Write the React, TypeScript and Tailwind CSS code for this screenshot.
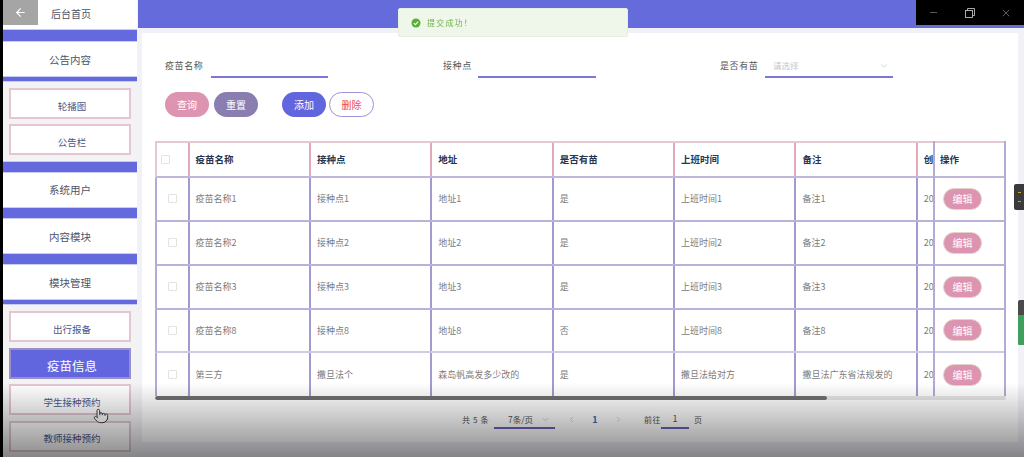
import React from "react";
import { ArrowLeft, ChevronDown, ChevronLeft, ChevronRight, Minus, Pointer, X } from "lucide-react";

const font = "[font-family:'Noto_Sans_CJK_SC','Noto_Sans',sans-serif]";

function Bar({ h }: { h: string }) {
  return <div className={`${h} w-full shrink-0 bg-[#646ade] border-y border-[#c9cbf2]`} />;
}

function MenuRow({ label, h, className }: { label: string; h: string; className?: string }) {
  return (
    <div className={`${h} shrink-0 bg-white flex items-center justify-center text-[10.5px] text-[#4b5468] ${className ?? ""}`}>
      {label}
    </div>
  );
}

function SubItem({ label, active }: { label: string; active?: boolean }) {
  return (
    <div
      className={`h-[31px] w-[122px] shrink-0 ml-[6px] border-[2px] flex items-end justify-center pl-[4px] ${
        active
          ? "bg-[#6266de] border-[#9a8fc8] text-white text-[12.5px] pb-[1px]"
          : "bg-white border-[#e3c5d3] text-[#4d5688] text-[9.5px] pb-[4px]"
      }`}
    >
      {label}
    </div>
  );
}

function Sidebar() {
  return (
    <aside className="w-[134px] ml-[3px] shrink-0 h-full flex flex-col overflow-hidden bg-[#f3f3f3]">
      <div className="h-[29px] shrink-0 bg-white flex items-start">
        <div className="w-[35px] h-[25px] bg-[#a5a5a5] flex items-center justify-center">
          <ArrowLeft size={13} color="#ffffff" strokeWidth={2} />
        </div>
        <div className="ml-[13px] mt-[6px] text-[10px] leading-[16px] text-[#4b5468]">后台首页</div>
      </div>
      <Bar h="h-[13px]" />
      <MenuRow label="公告内容" h="h-[34px]" className="pt-[2px]" />
      <Bar h="h-[6px]" />
      <div className="h-[79px] shrink-0 flex flex-col gap-[5px] pt-[6px]">
        <SubItem label="轮播图" />
        <SubItem label="公告栏" />
      </div>
      <Bar h="h-[12px]" />
      <MenuRow label="系统用户" h="h-[34px]" />
      <Bar h="h-[12px]" />
      <MenuRow label="内容模块" h="h-[34px]" className="pt-[2px]" />
      <Bar h="h-[12px]" />
      <MenuRow label="模块管理" h="h-[34px]" className="pt-[2px]" />
      <Bar h="h-[6px]" />
      <div className="flex flex-col gap-[5.5px] pt-[6px]">
        <SubItem label="出行报备" />
        <SubItem label="疫苗信息" active />
        <SubItem label="学生接种预约" />
        <SubItem label="教师接种预约" />
        <SubItem label="" />
      </div>
    </aside>
  );
}

function FilterLabel({ text, w }: { text: string; w: string }) {
  return <div className={`${w} shrink-0 text-[9px] tracking-[0.6px] text-[#555] whitespace-nowrap`}>{text}</div>;
}

const columns = ["疫苗名称", "接种点", "地址", "是否有苗", "上班时间", "备注", "创"];
const rows = [
  ["疫苗名称1", "接种点1", "地址1", "是", "上班时间1", "备注1", "20"],
  ["疫苗名称2", "接种点2", "地址2", "是", "上班时间2", "备注2", "20"],
  ["疫苗名称3", "接种点3", "地址3", "是", "上班时间3", "备注3", "20"],
  ["疫苗名称8", "接种点8", "地址8", "否", "上班时间8", "备注8", "20"],
  ["第三方", "撒旦法个", "森岛帆高发多少改的", "是", "撒旦法给对方", "撒旦法广东省法规发的", "20"],
];
const rowH = ["h-[43.5px]", "h-[44px]", "h-[44px]", "h-[43.5px]", "h-[43px]"];

function Check() {
  return <div className="w-[9px] h-[9px] rounded-[1px] border border-[#e2e2e6] bg-white" />;
}

function Table() {
  return (
    <div className="w-[851px] h-[259px] flex flex-col">
      <div className="flex flex-1 min-h-0">
        <div className="w-[778px] overflow-hidden">
          <div className="w-[860px]">
            <div className="flex h-[37px] border-y-2 border-t-[#e6c8d4] border-b-[#c2b6d8] border-l-2 border-l-[#e6c8d4]">
              <div className="w-[30.5px] shrink-0 flex items-center pl-[4px]">
                <Check />
              </div>
              {columns.map((c) => (
                <div
                  key={c}
                  className="w-[121.4px] shrink-0 border-l-2 border-[#e0a8ba] pl-[6px] pb-[1px] flex items-center text-[9.5px] font-bold text-[#27344f]"
                >
                  {c}
                </div>
              ))}
            </div>
            {rows.map((r, i) => (
              <div
                key={i}
                className={`flex ${rowH[i]} border-l-2 border-l-[#b3aad6] ${
                  i === 4 ? "" : i === 3 ? "border-b-2 border-b-[#d0cbe4]" : "border-b-2 border-b-[#bab2da]"
                }`}
              >
                <div className="w-[30.5px] shrink-0 flex items-center justify-center">
                  <Check />
                </div>
                {r.map((c, j) => (
                  <div
                    key={j}
                    className="w-[121.4px] shrink-0 border-l-2 border-[#a39ad0] pl-[6px] flex items-center text-[9px] text-[#7b7b7b] whitespace-nowrap"
                  >
                    {c}
                  </div>
                ))}
              </div>
            ))}
          </div>
        </div>
        <div className="w-[73px] shrink-0 bg-white border-x-2 border-[#b3aad6]">
          <div className="h-[37px] flex items-center pl-[5px] text-[9.5px] font-bold text-[#27344f] border-y-2 border-t-[#e6c8d4] border-b-[#c2b6d8]">
            操作
          </div>
          {rows.map((_, i) => (
            <div
              key={i}
              className={`${rowH[i]} flex items-center pl-[8px] ${
                i === 4 ? "" : i === 3 ? "border-b-2 border-b-[#d0cbe4]" : "border-b-2 border-b-[#bab2da]"
              }`}
            >
              <div className="w-[39px] h-[22px] rounded-full bg-[#dd94b1] border border-[#e3d3c8] flex items-center justify-center text-[10px] text-white">
                编辑
              </div>
            </div>
          ))}
        </div>
      </div>
      <div className="h-[4px] shrink-0 bg-[#e6e6e6] rounded-full overflow-hidden">
        <div className="h-full w-[672px] bg-[#707070] rounded-full" />
      </div>
    </div>
  );
}

function Pagination() {
  return (
    <div className="mt-[10px] h-[19px] flex items-start pl-[307px] text-[#666]">
      <div className="w-[32px] h-[19px] flex items-center text-[8px] tracking-[0.6px] text-[#555] whitespace-nowrap">共 5 条</div>
      <div className="w-[61px] h-[19px] pt-[1px] border-b-2 border-[#6d62b8] flex items-center pl-[14px] text-[8.5px] text-[#555] whitespace-nowrap">
        7条/页
        <ChevronDown size={9} color="#c0c4cc" className="ml-[8px]" />
      </div>
      <div className="w-[56px] ml-[12px] h-[19px] flex items-center justify-between text-[9px] font-bold text-[#2f6fc0]">
        <ChevronLeft size={9} color="#c0c4cc" />
        <span>1</span>
        <ChevronRight size={9} color="#c0c4cc" />
      </div>
      <div className="ml-[21px] w-[17px] h-[19px] flex items-center text-[8px] tracking-[0.4px] text-[#555] whitespace-nowrap">前往</div>
      <div className="w-[28px] h-[19px] pt-[1px] border-b-2 border-[#6d62b8] flex items-center justify-center text-[9px] text-[#555]">
        1
      </div>
      <div className="ml-[5px] h-[19px] flex items-center text-[8px] text-[#555]">页</div>
    </div>
  );
}

function Btn({ label, className }: { label: string; className: string }) {
  return <div className={`h-[25px] rounded-full flex items-center justify-center text-[10px] ${className}`}>{label}</div>;
}

function Card() {
  return (
    <div className="ml-[4px] mt-[5px] w-[876px] h-[409px] bg-white px-[13px]">
      <div className="pt-[22px] pl-[10px] flex items-end h-[45px]">
        <FilterLabel text="疫苗名称" w="w-[46px] mb-[6px]" />
        <div className="w-[117px] h-[20px] border-b-2 border-[#7f76da]" />
        <div className="w-[115px]" />
        <FilterLabel text="接种点" w="w-[35px] mb-[6px]" />
        <div className="w-[118px] h-[20px] border-b-2 border-[#7f76da]" />
        <div className="w-[124px]" />
        <FilterLabel text="是否有苗" w="w-[45px] mb-[6px]" />
        <div className="w-[128px] h-[20px] border-b-2 border-[#7f76da] flex items-center justify-between pl-[8px] pr-[4px] pb-[3px] text-[8.5px] text-[#c4c6cc]">
          请选择
          <ChevronDown size={10} color="#c8ccd4" />
        </div>
      </div>
      <div className="mt-[14px] pl-[10px] flex items-center">
        <Btn label="查询" className="w-[44px] bg-[#dd94b1] text-white" />
        <Btn label="重置" className="w-[44px] ml-[5px] bg-[#8a7db0] text-white" />
        <Btn label="添加" className="w-[44px] ml-[24px] bg-[#6266de] text-white" />
        <Btn label="删除" className="w-[45px] ml-[3px] bg-white border border-[#9d92d8] text-[#ee4d4d]" />
      </div>
      <div className="mt-[24px]">
        <Table />
      </div>
      <Pagination />
    </div>
  );
}

export default function App() {
  return (
    <div className={`relative w-[1024px] h-[457px] overflow-hidden bg-[#f1f1f8] ${font}`}>
      <div className="relative w-full h-full flex blur-[0.4px]">
        <div className="absolute left-0 top-0 w-[3px] h-full bg-black z-10" />
        <Sidebar />
        <main className="ml-[1px] flex-1 min-w-0 flex flex-col">
          <div className="h-[28px] shrink-0 bg-[#666bdb]" />
          <Card />
        </main>

        <div className="absolute left-[398px] top-[8px] w-[230px] h-[29px] rounded-[2px] bg-[#eef7e9] border border-[#e5f0dd] flex items-center pl-[12px] text-[8px] tracking-[1.2px] text-[#6fb44a]">
          <svg width="10" height="10" viewBox="0 0 10 10" className="mr-[6px]">
            <circle cx="5" cy="5" r="4.5" fill="#5bae35" />
            <path d="M2.8 5.1 L4.4 6.6 L7.2 3.6" fill="none" stroke="#fff" strokeWidth="1.1" />
          </svg>
          提交成功！
        </div>

        <div className="absolute right-0 top-0 w-[108px] h-[25px] bg-black flex items-center text-[#bdbdbd]">
          <Minus size={11} strokeWidth={1} className="ml-[12px]" />
          <svg width="10" height="10" viewBox="0 0 10 10" className="ml-[26px]" fill="none" stroke="#bdbdbd" strokeWidth="0.9">
            <rect x="0.5" y="2.5" width="7" height="7" />
            <path d="M2.5 2.5 V0.5 H9.5 V7.5 H7.5" />
          </svg>
          <X size={12} strokeWidth={1} className="ml-[25px]" />
        </div>

        <div className="absolute right-0 top-[184px] w-[10px] h-[26px] rounded-l-[2px] bg-[#3a3a3a] z-30 flex flex-col items-center justify-center gap-[8px]">
          <div className="w-[3px] h-[1px] bg-[#c9a23a]" />
          <div className="w-[3px] h-[1px] bg-[#8fbf3a]" />
        </div>
        <div className="absolute right-0 top-[300px] w-[6px] h-[45px] rounded-l-[2px] overflow-hidden bg-[#4a4a4a] z-30">
          <div className="mt-[15px] h-[30px] bg-[#3f9f5f]" />
        </div>
        <Pointer
          size={16}
          strokeWidth={1.4}
          color="#333"
          fill="#ffffff"
          className="absolute left-[93px] top-[408px] z-30"
        />
      </div>
      <div className="absolute inset-x-0 bottom-0 h-[74px] bg-linear-to-b from-transparent to-black/45 pointer-events-none z-20" />
    </div>
  );
}
